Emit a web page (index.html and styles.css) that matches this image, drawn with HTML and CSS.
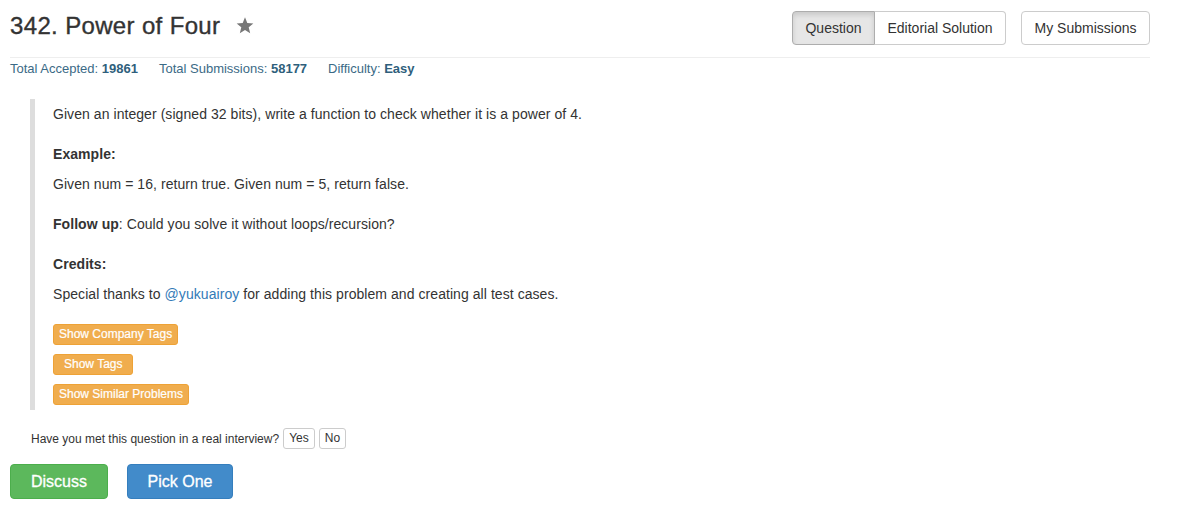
FILE: index.html
```html
<!DOCTYPE html>
<html>
<head>
<meta charset="utf-8">
<link rel="stylesheet" href="styles.css">
</head>
<body>
<div class="page">
  <div class="header">
    <div class="title-wrap">
      <h3 class="title">342. Power of Four</h3>
      <svg class="star" width="18" height="17" viewBox="0 0 24 23"><path d="M12 0.5l3.1 7.6 8.2 0.6-6.3 5.3 2 8-7-4.4-7 4.4 2-8L0.7 8.7l8.2-0.6z" fill="#777"/></svg>
    </div>
    <div class="actions">
      <div class="btn-group">
        <span class="btn active">Question</span>
        <span class="btn">Editorial Solution</span>
      </div>
      <span class="btn single">My Submissions</span>
    </div>
  </div>
  <div class="stats">
    <span class="stat">Total Accepted: <b>19861</b></span>
    <span class="stat">Total Submissions: <b>58177</b></span>
    <span class="stat">Difficulty: <b>Easy</b></span>
  </div>
  <div class="question">
    <p class="line gap">Given an integer (signed 32 bits), write a function to check whether it is a power of 4.</p>
    <p class="line small-gap"><b>Example:</b></p>
    <p class="line gap">Given num = 16, return true. Given num = 5, return false.</p>
    <p class="line gap"><b>Follow up</b>: Could you solve it without loops/recursion?</p>
    <p class="line small-gap"><b>Credits:</b></p>
    <p class="line last">Special thanks to <a class="link">@yukuairoy</a> for adding this problem and creating all test cases.</p>
    <div class="tags">
      <span class="tag">Show Company Tags</span>
      <span class="tag wide-pad">Show Tags</span>
      <span class="tag">Show Similar Problems</span>
    </div>
  </div>
  <div class="interview">
    <span>Have you met this question in a real interview?</span>
    <span class="mini">Yes</span>
    <span class="mini">No</span>
  </div>
  <div class="bottom">
    <span class="big green">Discuss</span>
    <span class="big blue">Pick One</span>
  </div>
</div>
</body>
</html>
```
FILE: styles.css
```css
html, body {
  margin: 0;
  padding: 0;
  background: #fff;
}
body {
  font-family: "Liberation Sans", Arial, sans-serif;
  font-size: 14px;
  color: #333;
}
.page {
  width: 1140px;
  padding-left: 10px;
}
.header {
  display: flex;
  justify-content: space-between;
  align-items: flex-start;
  height: 57px;
  border-bottom: 1px solid #eee;
}
.title-wrap {
  display: flex;
  align-items: center;
  margin-top: 11px;
}
.title {
  margin: 0;
  font-size: 24px;
  font-weight: normal;
  line-height: 30px;
  letter-spacing: 0.35px;
  color: #333;
  -webkit-text-stroke: 0.35px #333;
}
.star {
  margin-left: 16px;
  margin-top: -2px;
}
.actions {
  display: flex;
  margin-top: 11px;
}
.btn-group {
  display: flex;
}
.btn {
  display: inline-block;
  box-sizing: border-box;
  height: 34px;
  line-height: 32px;
  padding: 0 12px;
  border: 1px solid #ccc;
  background: #fff;
  color: #333;
  font-size: 14px;
}
.btn-group .btn:first-child {
  border-radius: 4px 0 0 4px;
  width: 83px;
  text-align: center;
}
.btn-group .btn:last-child {
  border-radius: 0 4px 4px 0;
  border-left: none;
  width: 131px;
  text-align: center;
}
.btn.active {
  background: #e6e6e6;
  border-color: #adadad;
  box-shadow: inset 0 3px 5px rgba(0,0,0,0.125);
}
.btn.single {
  margin-left: 15px;
  border-radius: 4px;
  width: 129px;
  text-align: center;
}
.stats {
  display: flex;
  height: 21px;
  align-items: center;
  font-size: 13px;
  color: #3b6a86;
}
.stats b {
  color: #2f5f7c;
}
.stat {
  margin-right: 21px;
}
.question {
  margin: 20px 0 0 20px;
  border-left: 5px solid #ddd;
  padding: 5px 0 5px 18px;
}
.line {
  margin: 0;
  line-height: 20px;
  letter-spacing: 0.06px;
}
.gap {
  margin-bottom: 20px;
}
.small-gap {
  margin-bottom: 10px;
}
.last {
  margin-bottom: 20px;
}
.link {
  color: #337ab7;
  text-decoration: none;
}
.tags {
  display: flex;
  flex-direction: column;
  align-items: flex-start;
  gap: 9px;
}
.tag {
  display: inline-block;
  box-sizing: border-box;
  height: 21px;
  padding: 0 5px;
  background: #f0ad4e;
  border: 1px solid #eea236;
  border-radius: 3px;
  color: #fff;
  font-size: 12px;
  line-height: 19px;
  -webkit-text-stroke: 0.2px #fff;
}
.tag.wide-pad {
  padding: 0 10px;
}
.interview {
  display: flex;
  align-items: center;
  margin: 18px 0 0 21px;
  font-size: 12px;
  color: #333;
}
.mini {
  display: inline-block;
  box-sizing: border-box;
  height: 21px;
  line-height: 19px;
  padding: 0 5px;
  border: 1px solid #ccc;
  border-radius: 3px;
  background: #fff;
  margin-left: 4px;
  font-size: 12px;
}
.bottom {
  display: flex;
  margin-top: 15px;
}
.big {
  display: inline-block;
  box-sizing: border-box;
  height: 35px;
  line-height: 33px;
  border-radius: 4px;
  color: #fff;
  font-size: 16px;
  text-align: center;
  -webkit-text-stroke: 0.3px #fff;
}
.green {
  width: 98px;
  background: #5cb85c;
  border: 1px solid #4cae4c;
}
.blue {
  width: 106px;
  margin-left: 19px;
  background: #428bca;
  border: 1px solid #357ebd;
}
```
